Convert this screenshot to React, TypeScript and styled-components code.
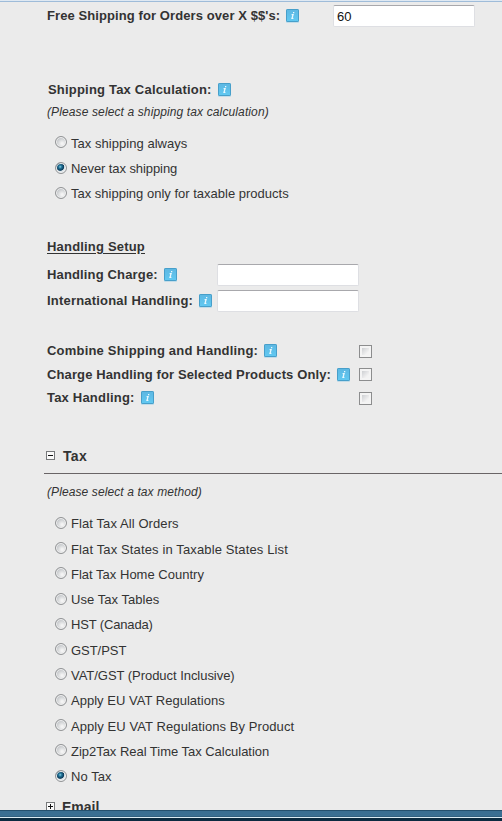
import React from "react";
import styled, { createGlobalStyle } from "styled-components";

const GlobalStyle = createGlobalStyle`
  * { box-sizing: border-box; }
  html, body { margin: 0; padding: 0; overflow: hidden; }
  body { background: #ebebeb; font-family: "Liberation Sans", Arial, sans-serif; color: #333; }
`;

const Page = styled.div`
  width: 502px;
  height: 821px;
  display: flex;
  flex-direction: column;
  overflow: hidden;
`;

const TopEdge = styled.div`
  height: 2px;
  flex: none;
  background: #dfe9f3;
  border-bottom: 1px solid #9fbcd9;
`;

const Content = styled.main`
  height: 808px;
  flex: none;
  overflow: hidden;
  padding-left: 47px;
`;

const Row = styled.div<{ $h: number; $top?: number }>`
  display: flex;
  align-items: center;
  height: ${(p) => p.$h}px;
  margin-top: ${(p) => p.$top ?? 0}px;
`;

const LabelCell = styled.div<{ $w: number; $nudge?: number }>`
  display: flex;
  align-items: center;
  gap: 6px;
  flex: none;
  width: ${(p) => p.$w}px;
  padding-left: ${(p) => p.$nudge ?? 0}px;
`;

const Label = styled.label<{ $ls: number }>`
  font-size: 13px;
  font-weight: bold;
  line-height: 16px;
  white-space: nowrap;
  letter-spacing: ${(p) => p.$ls}px;
`;

const Subheading = styled(Label)`
  text-decoration: underline;
  text-underline-offset: 2px;
`;

const Hint = styled.em<{ $ls: number }>`
  font-size: 12px;
  line-height: 16px;
  white-space: nowrap;
  letter-spacing: ${(p) => p.$ls}px;
`;

const TextInput = styled.input`
  width: 142px;
  height: 22px;
  padding: 2px 3px 0;
  border: 1px solid #dedfe3;
  border-top-color: #a8a8ac;
  border-radius: 2px;
  background: #fff;
  color: #111;
  font: 13px "Liberation Sans", Arial, sans-serif;
  outline: none;
`;

const Check = styled.input`
  appearance: none;
  width: 13px;
  height: 13px;
  margin: 0;
  border: 1px solid #8c8d8e;
  background: linear-gradient(135deg, #cdcfd2, #f3f3f3 75%) center / 7px 7px no-repeat #f4f4f4;
  box-shadow: inset 0 0 0 1px #f4f4f4;
`;

const RadioGroup = styled.div<{ $top: number }>`
  display: grid;
  grid-auto-rows: 25.27px;
  margin-top: ${(p) => p.$top}px;
  padding-left: 8px;
`;

const RadioLabel = styled.label<{ $ls: number }>`
  display: flex;
  align-items: center;
  gap: 4px;
  font-size: 13px;
  line-height: 16px;
  white-space: nowrap;
  letter-spacing: ${(p) => p.$ls}px;
`;

const RadioDot = styled.input`
  appearance: none;
  flex: none;
  width: 12px;
  height: 12px;
  margin: -3px 0 0;
  border: 1px solid #929496;
  border-radius: 50%;
  background: radial-gradient(circle at 62% 66%, #f4f4f4 10%, #c4c7ca 65%);
  box-shadow: inset 0 0 0 1px #f2f2f2;
  &:checked {
    background: radial-gradient(circle at 42% 38%, #8bd3e5 0, #23759a 18%, #0b3b5a 42%, #dfe6ea 52%);
  }
`;

const SectionHeader = styled.div<{ $h: number; $top: number; $gap: number; $ruled?: boolean }>`
  display: flex;
  align-items: center;
  gap: ${(p) => p.$gap}px;
  height: ${(p) => p.$h}px;
  margin: ${(p) => p.$top}px 0 0 -3px;
  padding-left: 2px;
  border-bottom: ${(p) => (p.$ruled ? "1px solid #696466" : "0")};
`;

const SectionTitle = styled.h2<{ $ls: number }>`
  margin: 0;
  font-size: 14px;
  line-height: 18px;
  font-weight: bold;
  letter-spacing: ${(p) => p.$ls}px;
`;

const BottomEdge = styled.div`
  flex: none;
  height: 11px;
  background: linear-gradient(
    #244f6d 0 1px, #3a6e92 1px 6px, #315f7e 6px 7px, #dcebf3 7px 8px, #0b2a40 8px 11px
  );
`;

const Icon = styled.svg`
  display: block;
  flex: none;
`;

const InfoIcon = () => (
  <Icon width="13" height="14" viewBox="0 0 13 14">
    <defs>
      <linearGradient id="info" x1="0" y1="0" x2="0" y2="1">
        <stop offset="0" stopColor="#5db7e2" />
        <stop offset="1" stopColor="#61c9f2" />
      </linearGradient>
    </defs>
    <rect x="0" y="1" width="13" height="13" rx="1" fill="#c3dce8" />
    <rect x="0.5" y="0.5" width="12" height="12" rx="0.6" fill="url(#info)" stroke="#479fca" />
    <path d="M7 3.6h1.3M5.6 5.5h1.5L6 9.3h1.4" fill="none" stroke="#eaf9ff" strokeWidth="1.25" />
  </Icon>
);

const Toggle = ({ open }: { open: boolean }) => (
  <Icon width="9" height="9" viewBox="0 0 9 9">
    <rect x="0.5" y="0.5" width="8" height="8" fill="#fafafa" stroke="#77797b" />
    <path d={open ? "M2 4.5h5" : "M2 4.5h5M4.5 2v5"} stroke="#111" />
  </Icon>
);

type Option = [text: string, spacing: number];

const shippingTax: Option[] = [
  ["Tax shipping always", 0.04],
  ["Never tax shipping", -0.08],
  ["Tax shipping only for taxable products", 0.005],
];

const taxMethods: Option[] = [
  ["Flat Tax All Orders", 0.09],
  ["Flat Tax States in Taxable States List", 0.13],
  ["Flat Tax Home Country", 0.01],
  ["Use Tax Tables", 0.04],
  ["HST (Canada)", -0.15],
  ["GST/PST", -0.05],
  ["VAT/GST (Product Inclusive)", -0.04],
  ["Apply EU VAT Regulations", 0.02],
  ["Apply EU VAT Regulations By Product", 0.08],
  ["Zip2Tax Real Time Tax Calculation", -0.03],
  ["No Tax", 0.05],
];

const Radios = ({ name, options, selected, top }: { name: string; options: Option[]; selected: number; top: number }) => (
  <RadioGroup $top={top}>
    {options.map(([text, ls], i) => (
      <RadioLabel key={text} $ls={ls}>
        <RadioDot type="radio" name={name} defaultChecked={i === selected} />
        <span>{text}</span>
      </RadioLabel>
    ))}
  </RadioGroup>
);

export default function App() {
  return (
    <>
      <GlobalStyle />
      <Page>
        <TopEdge />
        <Content>
          <Row $h={27}>
            <LabelCell $w={286}>
              <Label $ls={0.09}>Free Shipping for Orders over X $$'s:</Label>
              <InfoIcon />
            </LabelCell>
            <TextInput defaultValue="60" />
          </Row>

          <Row $h={20} $top={51}>
            <LabelCell $w={286} $nudge={1}>
              <Label $ls={0.2}>Shipping Tax Calculation:</Label>
              <InfoIcon />
            </LabelCell>
          </Row>
          <Row $h={20} $top={2}>
            <Hint $ls={0.12}>(Please select a shipping tax calculation)</Hint>
          </Row>
          <Radios name="shipping-tax" options={shippingTax} selected={1} top={9.3} />

          <Row $h={20} $top={29.7}>
            <Subheading $ls={0.19}>Handling Setup</Subheading>
          </Row>
          <Row $h={26} $top={5}>
            <LabelCell $w={170}>
              <Label $ls={0.15}>Handling Charge:</Label>
              <InfoIcon />
            </LabelCell>
            <TextInput />
          </Row>
          <Row $h={26}>
            <LabelCell $w={170}>
              <Label $ls={0.2}>International Handling:</Label>
              <InfoIcon />
            </LabelCell>
            <TextInput />
          </Row>

          <Row $h={23} $top={26.2}>
            <LabelCell $w={312}>
              <Label $ls={0.2}>Combine Shipping and Handling:</Label>
              <InfoIcon />
            </LabelCell>
            <Check type="checkbox" />
          </Row>
          <Row $h={24}>
            <LabelCell $w={312}>
              <Label $ls={0.12}>Charge Handling for Selected Products Only:</Label>
              <InfoIcon />
            </LabelCell>
            <Check type="checkbox" />
          </Row>
          <Row $h={23}>
            <LabelCell $w={312}>
              <Label $ls={0.2}>Tax Handling:</Label>
              <InfoIcon />
            </LabelCell>
            <Check type="checkbox" />
          </Row>

          <SectionHeader $h={35} $top={28.8} $gap={8} $ruled>
            <Toggle open />
            <SectionTitle $ls={0.3}>Tax</SectionTitle>
          </SectionHeader>
          <Row $h={20} $top={8}>
            <Hint $ls={0.1}>(Please select a tax method)</Hint>
          </Row>
          <Radios name="tax-method" options={taxMethods} selected={10} top={10} />

          <SectionHeader $h={20} $top={7} $gap={7}>
            <Toggle open={false} />
            <SectionTitle $ls={0}>Email</SectionTitle>
          </SectionHeader>
        </Content>
        <BottomEdge />
      </Page>
    </>
  );
}
